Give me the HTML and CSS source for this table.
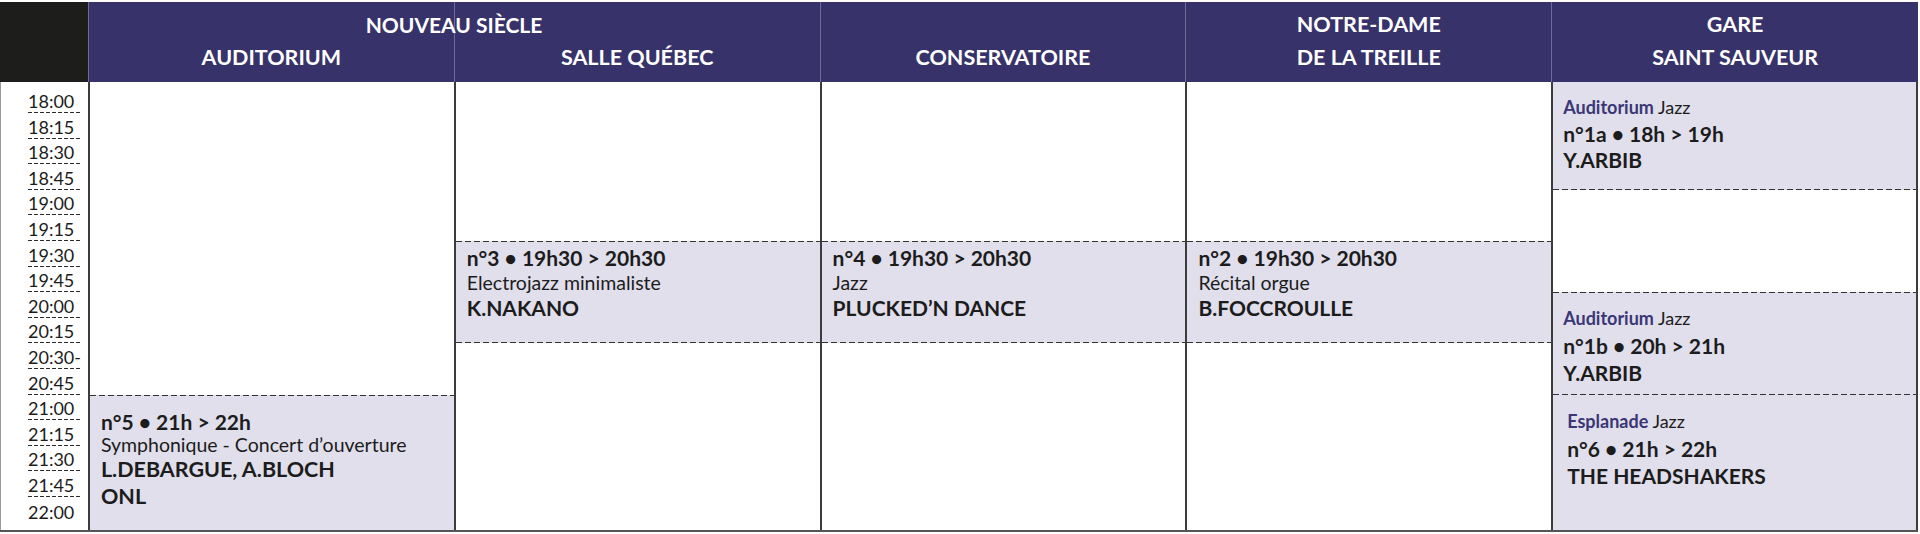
FILE: index.html
```html
<!DOCTYPE html>
<html lang="fr">
<head>
<meta charset="utf-8">
<title>Programme</title>
<link rel="stylesheet" href="styles.css">
</head>
<body>
<div class="sched">
  <div class="head">
    <div class="hcell corner"></div>
    <div class="hcell"><span>AUDITORIUM</span></div>
    <div class="hcell"><span>SALLE QUÉBEC</span></div>
    <div class="hcell"><span>CONSERVATOIRE</span></div>
    <div class="hcell"><span>NOTRE-DAME</span><span>DE LA TREILLE</span></div>
    <div class="hcell gare"><span>GARE</span><span>SAINT SAUVEUR</span></div>
    <div class="group">NOUVEAU SIÈCLE</div>
  </div>
  <div class="body">
    <div class="times">
      <div class="t"><span>18:00</span></div>
      <div class="t"><span>18:15</span></div>
      <div class="t"><span>18:30</span></div>
      <div class="t"><span>18:45</span></div>
      <div class="t"><span>19:00</span></div>
      <div class="t"><span>19:15</span></div>
      <div class="t"><span>19:30</span></div>
      <div class="t"><span>19:45</span></div>
      <div class="t"><span>20:00</span></div>
      <div class="t"><span>20:15</span></div>
      <div class="t"><span>20:30-</span></div>
      <div class="t"><span>20:45</span></div>
      <div class="t"><span>21:00</span></div>
      <div class="t"><span>21:15</span></div>
      <div class="t"><span>21:30</span></div>
      <div class="t"><span>21:45</span></div>
      <div class="t last"><span>22:00</span></div>
    </div>
    <div class="col">
      <div class="ev aud dash-t r21">
        <div class="num">n°5 • 21h &gt; 22h</div>
        <div class="genre">Symphonique - Concert d’ouverture</div>
        <div class="artist big">L.DEBARGUE, A.BLOCH</div>
        <div class="artist big">ONL</div>
      </div>
    </div>
    <div class="col">
      <div class="ev mid dash-tb r1930">
        <div class="num">n°3 • 19h30 &gt; 20h30</div>
        <div class="genre">Electrojazz minimaliste</div>
        <div class="artist">K.NAKANO</div>
      </div>
    </div>
    <div class="col">
      <div class="ev mid dash-tb r1930">
        <div class="num">n°4 • 19h30 &gt; 20h30</div>
        <div class="genre">Jazz</div>
        <div class="artist">PLUCKED’N DANCE</div>
      </div>
    </div>
    <div class="col">
      <div class="ev mid dash-tb r1930">
        <div class="num">n°2 • 19h30 &gt; 20h30</div>
        <div class="genre">Récital orgue</div>
        <div class="artist">B.FOCCROULLE</div>
      </div>
    </div>
    <div class="col last-col">
      <div class="ev gev g1 dash-b r18">
        <div class="venue"><b>Auditorium</b> Jazz</div>
        <div class="num">n°1a • 18h &gt; 19h</div>
        <div class="artist g">Y.ARBIB</div>
      </div>
      <div class="ev gev g2 dash-tb r20">
        <div class="venue"><b>Auditorium</b> Jazz</div>
        <div class="num">n°1b • 20h &gt; 21h</div>
        <div class="artist g">Y.ARBIB</div>
      </div>
      <div class="ev gev esp r21">
        <div class="venue"><b>Esplanade</b> Jazz</div>
        <div class="num">n°6 • 21h &gt; 22h</div>
        <div class="artist g">THE HEADSHAKERS</div>
      </div>
    </div>
  </div>
</div>
</body>
</html>
```

FILE: styles.css
```css
* { box-sizing: border-box; }

html, body {
  margin: 0;
  padding: 0;
  background: #ffffff;
}

body {
  font-family: Lato, "Open Sans", "Liberation Sans", sans-serif;
  color: #1c1c1c;
}

.sched {
  width: 1918px;
  margin-top: 2px;
}

/* ---------- header ---------- */
.head {
  position: relative;
  display: flex;
  height: 80px;
  background: #37336a;
}

.hcell {
  width: 366px;
  display: flex;
  flex-direction: column;
  justify-content: flex-end;
  align-items: center;
  padding-bottom: 8px;
  border-left: 1px solid #6e6b98;
  color: #ffffff;
  font-weight: 700;
  font-size: 21.5px;
  line-height: 33px;
}

.hcell.corner {
  width: 88px;
  background: #1d1d1b;
  border-left: none;
}

.hcell.gare {
  width: 367px;
}

.group {
  position: absolute;
  left: 454px;
  top: 9px;
  transform: translateX(-50%);
  color: #ffffff;
  font-weight: 700;
  font-size: 21px;
  line-height: 27px;
  white-space: nowrap;
}

/* ---------- body ---------- */
.body {
  display: flex;
  border-bottom: 2px solid #555555;
}

.times,
.col {
  display: grid;
  grid-template-rows: 31px repeat(15, 25.6px) 33px;
}

.times {
  width: 88px;
  padding-left: 2px;
  border-left: 1px solid #9a9a9a;
}

.t {
  display: flex;
  align-items: flex-end;
  padding-left: 25px;
}

.t span {
  display: block;
  width: 54px;
  font-size: 18px;
  line-height: 18px;
  padding-bottom: 3px;
  color: #1c1c1c;
  background-image: linear-gradient(to right, #2a2a2a 4px, transparent 4px);
  background-size: 6px 1px;
  background-repeat: repeat-x;
  background-position: left bottom;
}

.t.last span {
  background: none;
  padding-bottom: 9px;
}

.col {
  width: 366px;
  border-left: 2px solid #3c3c3c;
}

.col.last-col {
  width: 367px;
  border-right: 2px solid #3c3c3c;
}

/* ---------- events ---------- */
.ev {
  background-color: #e0dfeb;
  padding-left: 11px;
}

.dash-t {
  background-image: linear-gradient(to right, #333333 6px, transparent 6px);
  background-size: 9px 1px;
  background-repeat: repeat-x;
  background-position: left top;
}

.dash-b {
  background-image: linear-gradient(to right, #333333 6px, transparent 6px);
  background-size: 9px 1px;
  background-repeat: repeat-x;
  background-position: left bottom;
}

.dash-tb {
  background-image:
    linear-gradient(to right, #333333 6px, transparent 6px),
    linear-gradient(to right, #333333 6px, transparent 6px);
  background-size: 9px 1px, 9px 1px;
  background-repeat: repeat-x, repeat-x;
  background-position: left top, left bottom;
}

.r18 { grid-row: 1 / 5; }
.r1930 { grid-row: 7 / 11; }
.r20 { grid-row: 9 / 13; }
.r21 { grid-row: 13 / 18; }

.num {
  font-weight: 700;
  font-size: 21px;
}

.genre {
  font-size: 19.5px;
}

.artist {
  font-weight: 700;
  font-size: 21px;
}

.artist.big {
  font-size: 21.5px;
}

.mid {
  padding-top: 4px;
  line-height: 25px;
}

.aud {
  padding-top: 15px;
  line-height: 27px;
}

.aud .num { line-height: 24px; }
.aud .genre { line-height: 22px; }

.gev {
  padding-left: 10px;
  padding-top: 12px;
  line-height: 26.5px;
}

.gev.g2 {
  padding-top: 13px;
  line-height: 27px;
}

.gev.esp {
  padding-left: 14px;
  padding-top: 13px;
  line-height: 27px;
}

.venue {
  font-size: 18px;
}

.venue b {
  color: #3b3676;
  font-weight: 700;
}

.artist.g {
  font-size: 21px;
}
```
